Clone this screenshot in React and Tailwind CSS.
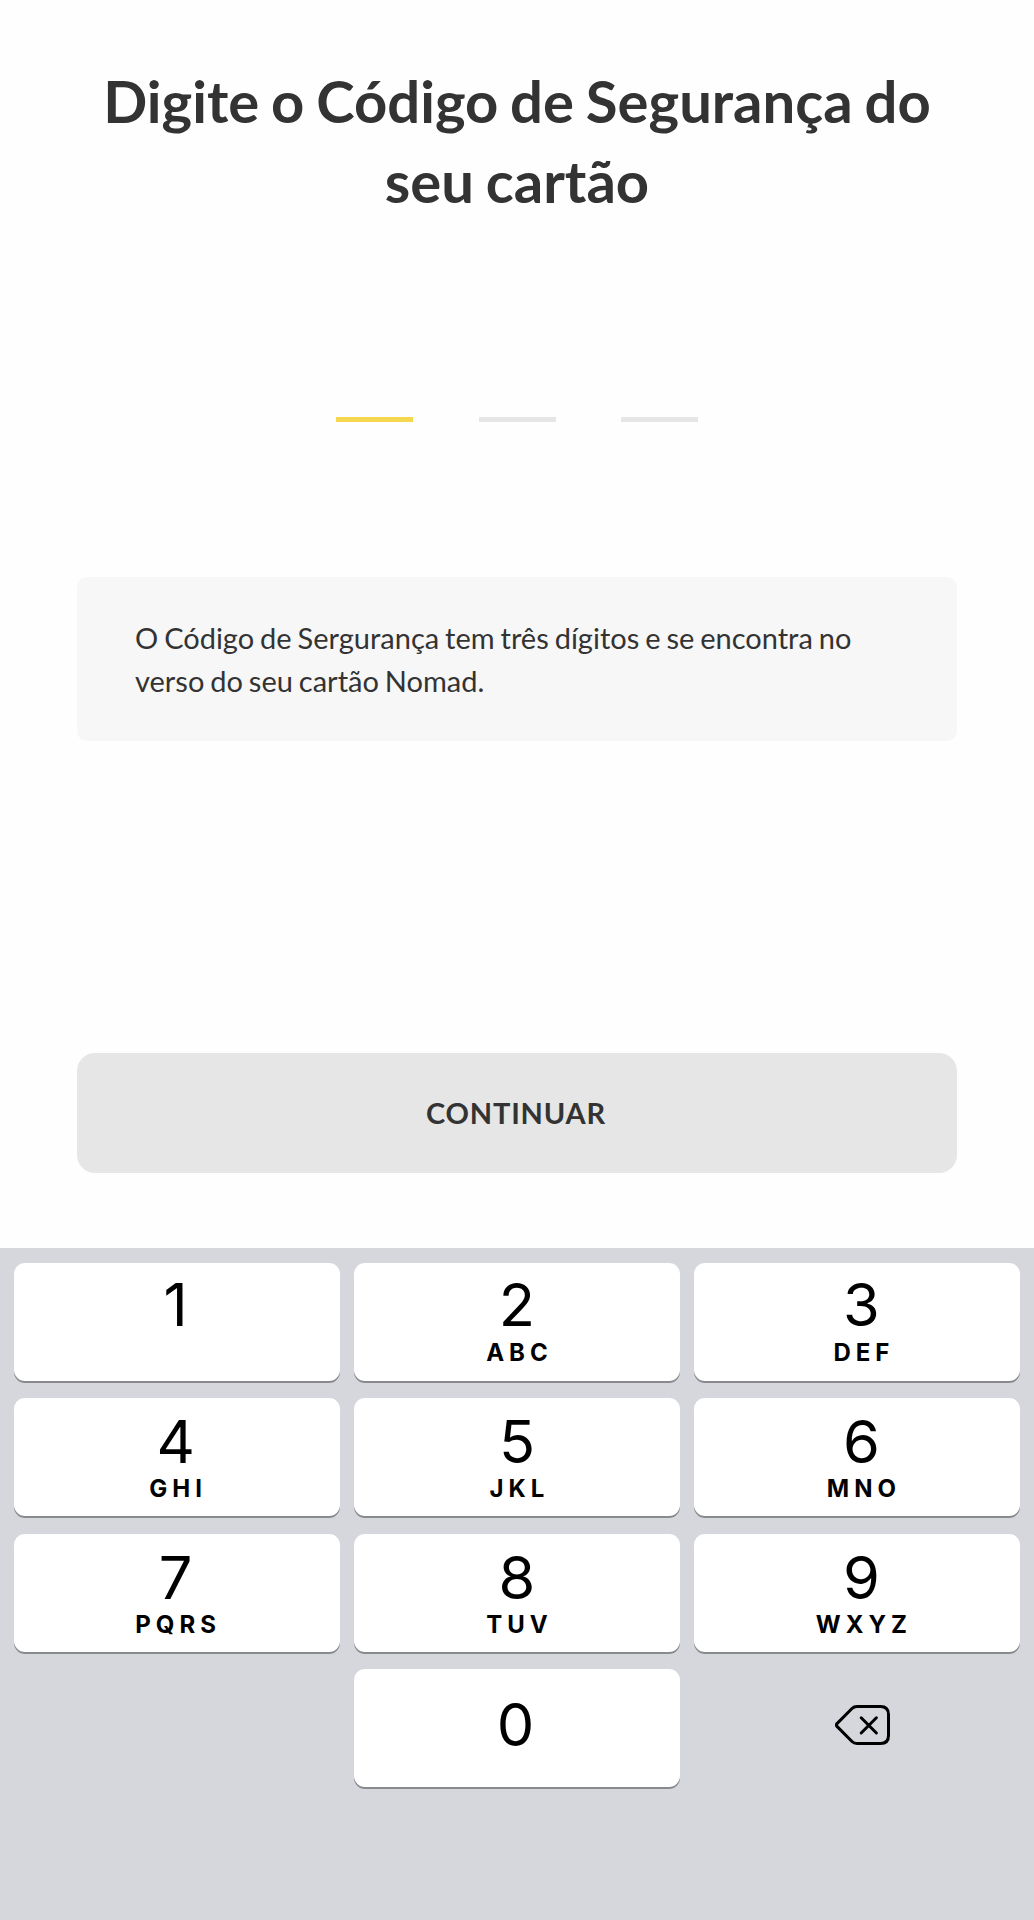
const rows = [
  [{ digit: '1', letters: '' }, { digit: '2', letters: 'ABC' }, { digit: '3', letters: 'DEF' }],
  [{ digit: '4', letters: 'GHI' }, { digit: '5', letters: 'JKL' }, { digit: '6', letters: 'MNO' }],
  [{ digit: '7', letters: 'PQRS' }, { digit: '8', letters: 'TUV' }, { digit: '9', letters: 'WXYZ' }]
]

// labels are not perfectly centered in the outer columns
const colPadding = ['pr-[3px]', '', 'pl-[9px]']

function Key({ digit, letters, className }) {
  return (
    <button className={`flex h-[118px] flex-col items-center rounded-[11px] bg-white shadow-[0_2px_0_#898a8d] ${className}`}>
      <span className="text-[59.5px]">{digit}</span>
      <span className="pl-[5px] text-[24px] leading-[34px] font-bold tracking-[5px]">{letters}</span>
    </button>
  )
}

export default function App() {
  return (
    <div className="flex h-[1920px] w-[1034px] flex-col bg-[#fefefe] font-['Lato',sans-serif] text-[#333333]">
      <div className="flex h-[1248px] flex-col px-[77px] pt-[61px]">
        <h1 className="text-center text-[58px] leading-[80px] font-bold [word-spacing:-2.3px]">Digite o Código de Segurança do<br />seu cartão</h1>
        <div className="mt-[196px] flex justify-center gap-[65.5px]">
          <div className="h-[5px] w-[77px] bg-[#f5d64f]" />
          <div className="h-[5px] w-[77px] bg-[#e6e6e6]" />
          <div className="h-[5px] w-[77px] bg-[#e6e6e6]" />
        </div>
        <div className="mt-[155px] h-[164px] rounded-[10px] bg-[#f7f7f7] px-[58px] pt-[38.5px] text-[29px] leading-[43.5px] [word-spacing:-1.5px]">
          O Código de Sergurança tem três dígitos e se encontra no<br />verso do seu cartão Nomad.
        </div>
        <button className="mt-[312px] h-[120px] rounded-[18px] bg-[#e6e6e6] pr-0.5 text-[29px] font-bold tracking-[0.8px]">CONTINUAR</button>
      </div>
      <div className="flex-1 bg-[#d5d7dd] px-[14.3px] pt-[15px] font-['Inter',sans-serif] text-black">
        <div className="grid grid-cols-3 gap-x-[14.3px] gap-y-[17.3px]">
          {rows.map((row, r) => row.map((k, c) => (
            <Key key={k.digit} {...k} className={`${r === 0 ? 'pt-2.5 leading-[63px]' : 'pt-3 leading-[62px]'} ${colPadding[c]}`} />
          )))}
          <button className="col-start-2 h-[118px] rounded-[11px] bg-white pr-[3px] pb-1.5 text-[59.5px] leading-none shadow-[0_2px_0_#898a8d]">0</button>
          <button className="flex items-center justify-center pb-1.5 pl-3" aria-label="Apagar">
            <svg width="55" height="40" viewBox="0 0 55 40" fill="none" stroke="currentColor" strokeWidth="3" strokeLinecap="round" strokeLinejoin="round">
              <path d="M22 1.5H45.5Q53.5 1.5 53.5 9.5V30.5Q53.5 38.5 45.5 38.5H22Q19 38.5 17 36.5L2 21.4Q0.8 20 2 18.6L17 3.5Q19 1.5 22 1.5Z" />
              <path d="M26.2 12.8L41.4 28M41.4 12.8L26.2 28" />
            </svg>
          </button>
        </div>
      </div>
    </div>
  )
}
